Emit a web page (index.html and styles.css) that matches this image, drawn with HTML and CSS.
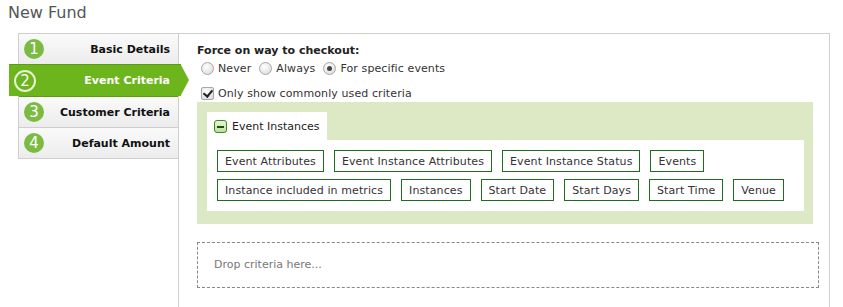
FILE: index.html
```html
<!DOCTYPE html>
<html lang="en">
<head>
    <meta charset="UTF-8">
    <meta name="viewport" content="width=device-width, initial-scale=1.0">
    <title>New Fund</title>
    <link rel="stylesheet" href="styles.css">
</head>
<body>

    <h1 class="page-title">New Fund</h1>

    <div class="wizard">
        <ul class="steps">
            <li class="step"><span class="step-num">1</span><span class="step-label">Basic Details</span></li>
            <li class="step active"><span class="step-num">2</span><span class="step-label">Event Criteria</span></li>
            <li class="step"><span class="step-num">3</span><span class="step-label">Customer Criteria</span></li>
            <li class="step"><span class="step-num">4</span><span class="step-label">Default Amount</span></li>
        </ul>

        <section class="panel">
            <div class="field-title">Force on way to checkout:</div>
            <div class="radios">
                <label><input type="radio" name="force"> Never</label>
                <label><input type="radio" name="force"> Always</label>
                <label><input type="radio" name="force" checked> For specific events</label>
            </div>
            <label class="common"><input type="checkbox" checked> Only show commonly used criteria</label>

            <div class="criteria">
                <div class="group-tab">
                    <span class="toggle"></span>
                    Event Instances
                </div>
                <div class="group-body">
                    <span class="chip">Event Attributes</span>
                    <span class="chip">Event Instance Attributes</span>
                    <span class="chip">Event Instance Status</span>
                    <span class="chip">Events</span>
                    <span class="chip">Instance included in metrics</span>
                    <span class="chip">Instances</span>
                    <span class="chip">Start Date</span>
                    <span class="chip">Start Days</span>
                    <span class="chip">Start Time</span>
                    <span class="chip">Venue</span>
                </div>
            </div>

            <div class="dropzone">Drop criteria here...</div>
        </section>
    </div>

</body>
</html>
```

FILE: styles.css
```css
body {
    font-family: "DejaVu Sans", Verdana, sans-serif;
    font-size: 11px;
    color: #222;
    margin: 0;
    padding: 0;
    background-color: #ffffff;
    overflow: hidden;
}
.page-title {
    font-size: 16px;
    font-weight: normal;
    color: #555;
    margin: 0;
    padding: 3px 8px 0;
    height: 30px;
    box-sizing: border-box;
}
.wizard {
    display: flex;
    margin-left: 18px;
    margin-top: 3px;
}
.steps {
    list-style: none;
    margin: 0;
    padding: 0;
    width: 159px;
    border: 1px solid #cfcfcf;
    border-right: none;
    align-self: flex-start;
}
.step {
    display: flex;
    align-items: center;
    justify-content: space-between;
    height: 30px;
    padding: 0 8px 0 5px;
    border-top: 1px solid #cfcfcf;
    background: linear-gradient(#fafafa, #ececec);
    font-weight: bold;
    color: #111;
}
.step:first-child {
    border-top: none;
}
.step-num {
    width: 20px;
    height: 20px;
    border-radius: 50%;
    background-color: #7cbb42;
    color: #fff;
    font-weight: normal;
    font-size: 15px;
    line-height: 20px;
    text-align: center;
}
.step.active {
    position: relative;
    margin-left: -10px;
    margin-right: -3px;
    padding-left: 5px;
    padding-right: 11px;
    height: 31px;
    border-top: 1px solid #5f9c15;
    background: #6db51d;
    color: #fff;
}
.step.active + .step {
    border-top: 1px solid #5f9c15;
}
.step.active::after {
    content: "";
    position: absolute;
    right: -8px;
    top: 0;
    border-top: 15.5px solid transparent;
    border-bottom: 15.5px solid transparent;
    border-left: 8px solid #6db51d;
}
.step.active .step-num {
    width: 18px;
    height: 18px;
    line-height: 18px;
    background: transparent;
    border: 2px solid #e6f3d6;
}
.panel {
    box-sizing: border-box;
    width: 652px;
    height: 274px;
    border: 1px solid #cfcfcf;
    border-bottom: none;
    padding: 10px 15px 0 18px;
}
.field-title {
    font-weight: bold;
    margin-bottom: 5px;
}
.radios {
    display: flex;
    gap: 8px;
    margin-left: 4px;
}
.radios label, .common {
    display: flex;
    align-items: center;
    color: #333;
    letter-spacing: 0.1px;
}
input[type="radio"], input[type="checkbox"] {
    appearance: none;
    margin: 0 4px 0 0;
    width: 13px;
    height: 13px;
    border: 1px solid #a8a8a8;
    background: radial-gradient(circle at 40% 35%, #ffffff, #d6d6d6);
    position: relative;
}
input[type="radio"] {
    border-radius: 50%;
}
input[type="radio"]:checked::after {
    content: "";
    position: absolute;
    left: 3px;
    top: 3px;
    width: 5px;
    height: 5px;
    border-radius: 50%;
    background: #444;
}
input[type="checkbox"] {
    border-radius: 2px;
}
input[type="checkbox"]:checked::after {
    content: "";
    position: absolute;
    left: 3px;
    top: 0;
    width: 4px;
    height: 7px;
    border: solid #222;
    border-width: 0 2px 2px 0;
    transform: rotate(40deg);
}
.common {
    margin: 12px 0 0 4px;
}
.criteria {
    background-color: #dce9c4;
    margin-top: 2px;
    margin-right: 1px;
    padding: 10px 9px 13px 10px;
}
.group-tab {
    display: inline-flex;
    align-items: center;
    gap: 5px;
    background: #fff;
    height: 28px;
    padding: 0 7px;
    font-size: 11px;
    color: #222;
}
.toggle {
    width: 11px;
    height: 11px;
    border: 1px solid #3c8a1c;
    border-radius: 3px;
    background: linear-gradient(#e6f3d6, #bfe0a0);
    position: relative;
}
.toggle::after {
    content: "";
    position: absolute;
    left: 2px;
    right: 2px;
    top: 5px;
    height: 2px;
    background: #1e4d0e;
}
.group-body {
    background: #fff;
    padding: 10px;
    display: flex;
    flex-wrap: wrap;
    gap: 7px 10px;
}
.chip {
    border: 1px solid #1f6b1f;
    padding: 4px 7px 3px;
    line-height: 13px;
    color: #333;
    letter-spacing: 0.1px;
}
.dropzone {
    border: 1px dashed #888;
    margin-top: 18px;
    margin-right: -5px;
    height: 44px;
    line-height: 44px;
    padding-left: 16px;
    color: #777;
}
```
